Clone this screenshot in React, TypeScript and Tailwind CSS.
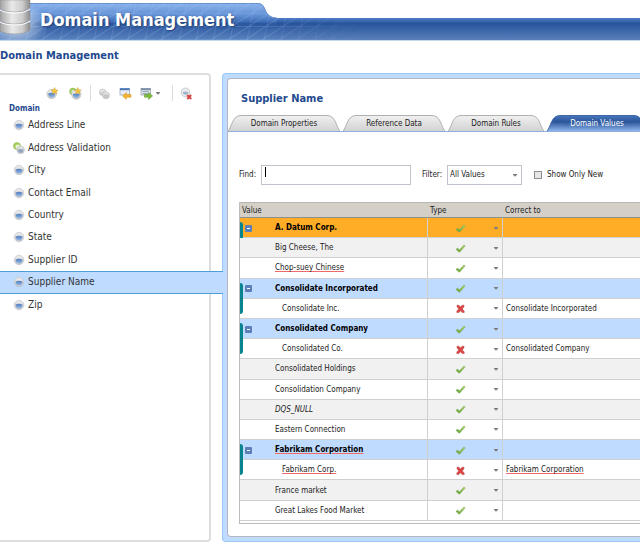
import { useState } from "react";
import type { ReactNode } from "react";
import clsx from "clsx";

type Domain = { name: string; composite?: boolean };

type DomainValue = {
  value: string;
  valid: boolean;
  kind?: "leader" | "synonym";
  correctTo?: string;
  misspelled?: boolean;
};

const domains: Domain[] = [
  { name: "Address Line" },
  { name: "Address Validation", composite: true },
  { name: "City" },
  { name: "Contact Email" },
  { name: "Country" },
  { name: "State" },
  { name: "Supplier ID" },
  { name: "Supplier Name" },
  { name: "Zip" },
];

const tabs = [
  { name: "Domain Properties", width: "w-[112px]" },
  { name: "Reference Data", width: "w-[102px]" },
  { name: "Domain Rules", width: "w-[96px]" },
  { name: "Domain Values", width: "w-[100px]" },
];

const values: DomainValue[] = [
  { value: "A. Datum Corp.", valid: true, kind: "leader" },
  { value: "Big Cheese, The", valid: true },
  { value: "Chop-suey Chinese", valid: true, misspelled: true },
  { value: "Consolidate Incorporated", valid: true, kind: "leader" },
  { value: "Consolidate Inc.", valid: false, kind: "synonym", correctTo: "Consolidate Incorporated" },
  { value: "Consolidated Company", valid: true, kind: "leader" },
  { value: "Consolidated Co.", valid: false, kind: "synonym", correctTo: "Consolidated Company" },
  { value: "Consolidated Holdings", valid: true },
  { value: "Consolidation Company", valid: true },
  { value: "DQS_NULL", valid: true },
  { value: "Eastern Connection", valid: true },
  { value: "Fabrikam Corporation", valid: true, kind: "leader", misspelled: true },
  { value: "Fabrikam Corp.", valid: false, kind: "synonym", correctTo: "Fabrikam Corporation", misspelled: true },
  { value: "France market", valid: true },
  { value: "Great Lakes Food Market", valid: true },
];

const Gradients = () => (
  <svg width="0" height="0" className="absolute" aria-hidden="true">
    <defs>
      <linearGradient id="ball" x1="0" y1="0" x2="0" y2="1">
        <stop offset="0" stopColor="#eeeeee" />
        <stop offset="1" stopColor="#c3c6ca" />
      </linearGradient>
      <linearGradient id="bowl" x1="0" y1="0" x2="0" y2="1">
        <stop offset="0" stopColor="#4f7dbe" />
        <stop offset="1" stopColor="#94b8e4" />
      </linearGradient>
      <linearGradient id="metal" x1="0" y1="0" x2="1" y2="0">
        <stop offset="0" stopColor="#a4a4a4" />
        <stop offset="0.4" stopColor="#e9e9e9" />
        <stop offset="0.75" stopColor="#cccccc" />
        <stop offset="1" stopColor="#8c8c8c" />
      </linearGradient>
      <linearGradient id="tabGray" x1="0" y1="0" x2="0" y2="1">
        <stop offset="0" stopColor="#f0f0f0" />
        <stop offset="1" stopColor="#d2d2d2" />
      </linearGradient>
      <linearGradient id="tabBlue" x1="0" y1="0" x2="0" y2="1">
        <stop offset="0" stopColor="#4774bb" />
        <stop offset="0.4" stopColor="#2a5599" />
        <stop offset="1" stopColor="#8db4ec" />
      </linearGradient>
      <linearGradient id="check" x1="1" y1="0" x2="0" y2="1">
        <stop offset="0" stopColor="#b4dc6c" />
        <stop offset="1" stopColor="#5c9c2c" />
      </linearGradient>
    </defs>
  </svg>
);

const Ball = () => (
  <g>
    <circle cx="6" cy="6" r="4.7" fill="url(#ball)" stroke="#b9bcc1" strokeWidth="0.6" />
    <path d="M2.7 5.4q3.3-1.2 6.6 0a3.35 3.35 0 1 1-6.6 0z" fill="url(#bowl)" />
  </g>
);

const Star = () => (
  <path d="M0-3.4 1-1.1l2.5.2-1.9 1.6.6 2.4L0 1.8l-2.2 1.3.6-2.4-1.9-1.6 2.5-.2z" fill="#f6c840" stroke="#c99a34" strokeWidth="0.5" />
);

const DomainIcon = ({ composite }: { composite?: boolean }) => (
  <svg width="12" height="12" viewBox="0 0 12 12" className="shrink-0" aria-hidden="true">
    {composite ? (
      <>
        <circle cx="4" cy="4" r="3.6" fill="#a4cf5c" stroke="#8fb957" strokeWidth="0.5" />
        <circle cx="4.8" cy="4.8" r="2.4" fill="#e6f2d2" />
        <circle cx="7.6" cy="7.9" r="3.7" fill="url(#ball)" stroke="#aeb1b6" strokeWidth="0.6" />
        <path d="M5 7.5q2.6-.9 5.2 0a2.65 2.65 0 1 1-5.2 0z" fill="#93a6bf" />
      </>
    ) : (
      <Ball />
    )}
  </svg>
);

const ToolIcon = ({ label, children }: { label: string; children: ReactNode }) => (
  <button type="button" aria-label={label} title={label}>
    <svg width="13" height="13" viewBox="0 0 13 13">
      {children}
    </svg>
  </button>
);

const Caret = () => (
  <svg width="4" height="3" viewBox="0 0 4 3" className="shrink-0" aria-hidden="true">
    <path d="M0 0h4v.8L2 2.7 0 .8z" fill="#7c7c7c" />
  </svg>
);

const Toolbar = () => (
  <div className="flex h-[14px] items-center pl-[46px]">
    <ToolIcon label="Create a domain">
      <g transform="translate(-.4 1)">
        <Ball />
      </g>
      <g transform="translate(8.6 4)">
        <Star />
      </g>
    </ToolIcon>
    <div className="ml-2.5 flex">
      <ToolIcon label="Create a composite domain">
        <circle cx="4" cy="4.5" r="3.4" fill="#a4cf5c" stroke="#8fb957" strokeWidth="0.6" />
        <circle cx="4.4" cy="5" r="2" fill="#e6f2d2" />
        <g transform="translate(1.3 1.6)">
          <Ball />
        </g>
        <g transform="translate(8.8 4)">
          <Star />
        </g>
      </ToolIcon>
    </div>
    <span className="ml-2 h-4 w-px bg-[#dcdcdc]" />
    <div className="ml-[7px] flex gap-2">
      <ToolIcon label="Create a linked domain">
        <g fill="url(#ball)" stroke="#b5b5b5" strokeWidth="0.6">
          <circle cx="4.6" cy="5.2" r="3.2" />
          <circle cx="8" cy="8.2" r="3.5" />
        </g>
        <path d="M5.6 7.8q2.4-.8 4.8 0a2.4 2.4 0 1 1-4.8 0z" fill="#c3c3c3" />
      </ToolIcon>
      <ToolIcon label="Import a domain">
        <rect x="1" y="1.5" width="9.5" height="6.5" fill="#e9eef5" stroke="#8ea0ba" strokeWidth="0.7" />
        <path d="M1 1.2h9.5v2H1z" fill="#4c78b8" />
        <path d="M3.4 8.9 7.4 5.4v2.1H12v2.8H7.4v2.1z" fill="#f5b42c" stroke="#cf9430" strokeWidth="0.5" />
      </ToolIcon>
      <ToolIcon label="Export a domain">
        <rect x="1" y="1.5" width="9.5" height="6.5" fill="#e3e8ee" stroke="#8f9aa8" strokeWidth="0.7" />
        <path d="M1 1.2h9.5v2H1zM2.5 4.3h6v.8h-6zM2.5 6h6v.8h-6z" fill="#7e8fa6" />
        <path d="M12.6 8.9 8.6 5.4v2.1H4.4v2.8h4.2v2.1z" fill="#7cbb3a" stroke="#5c9630" strokeWidth="0.5" />
      </ToolIcon>
    </div>
    <div className="ml-[3px] flex">
      <Caret />
    </div>
    <span className="ml-3 h-4 w-px bg-[#dcdcdc]" />
    <div className="ml-[7px] flex">
      <ToolIcon label="Delete the domain">
        <circle cx="5.6" cy="5.4" r="4.4" fill="#ececec" stroke="#b9bcc1" strokeWidth="0.7" />
        <path d="M2.8 5q2.8-1 5.6 0a2.8 2.8 0 1 1-5.6 0z" fill="#9db4d0" />
        <path d="m7.2 8 4 4M11.2 8l-4 4" stroke="#d64545" strokeWidth="2" />
      </ToolIcon>
    </div>
  </div>
);

const TypeIcon = ({ valid }: { valid: boolean }) => (
  <svg width="11" height="11" viewBox="0 0 11 11" className="shrink-0" aria-hidden="true">
    {valid ? (
      <path d="M.9 6.3 2.7 5.2l1.8 1.5L8.9 2l1.3.9-5.5 6.2H3.9z" fill="url(#check)" stroke="#7ba65a" strokeWidth="0.5" />
    ) : (
      <path
        d="M2 2.2h1.9l1.6 1.9 1.6-1.9H9v1.5L7.3 5.9 9.2 8v1.6H7.2L5.5 7.7 3.8 9.6h-2V8l1.9-2.1L2 3.7z"
        fill="#dd4444"
        stroke="#b94848"
        strokeWidth="0.5"
      />
    )}
  </svg>
);

const Banner = () => (
  <header className="relative h-[41px] pt-[18px]">
    <div className="h-[23px] border-b border-[#c5d8ea] bg-linear-to-b from-[#4f7dc8] via-[#28549b] via-25% to-[#5a80bb]" />
    <svg width="370" height="41" viewBox="0 0 370 41" className="absolute left-0 top-0" aria-hidden="true">
      <defs>
        <linearGradient id="raised" x1="0" y1="0" x2="0" y2="1">
          <stop offset="0" stopColor="#8db5ee" />
          <stop offset="0.35" stopColor="#5f8dd2" />
          <stop offset="0.5" stopColor="#3f6eb8" />
          <stop offset="0.56" stopColor="#2a569e" />
          <stop offset="1" stopColor="#5a82be" />
        </linearGradient>
        <linearGradient id="fade" x1="0" y1="0" x2="1" y2="0">
          <stop offset="0.7" stopColor="#fff" />
          <stop offset="1" stopColor="#000" />
        </linearGradient>
        <radialGradient id="glow">
          <stop offset="0" stopColor="#e2eefc" />
          <stop offset="1" stopColor="#e2eefc" stopOpacity="0" />
        </radialGradient>
        <pattern id="mesh" width="17" height="13" patternUnits="userSpaceOnUse" patternTransform="skewX(-12)">
          <path d="M0 13V0h17M0 13 17 0" fill="none" stroke="#a9cdf8" strokeWidth="0.8" />
        </pattern>
        <mask id="meshFade">
          <rect width="370" height="41" fill="url(#fade)" />
        </mask>
        <clipPath id="shape">
          <path d="M0 3h258q5 0 7 6 3 9 12 9h93v22H0z" />
        </clipPath>
      </defs>
      <path d="M0 3h258q5 0 7 6 3 9 12 9v22H0z" fill="url(#raised)" />
      <path d="M0 3.5h258q5 0 7 6 3 8.500 12 8.500" fill="none" stroke="#5f86c0" strokeWidth="0.8" />
      <g clipPath="url(#shape)">
        <rect width="370" height="41" fill="url(#mesh)" opacity="0.45" mask="url(#meshFade)" />
        <ellipse cx="16" cy="24" rx="32" ry="22" fill="url(#glow)" />
      </g>
      <g stroke="#8b8b8b" strokeWidth="0.5">
        <path d="M0 23h30v7q-5 4-15 4T0 31z" fill="url(#metal)" />
        <path d="M0 11h30v9q-5 4-15 4T0 21z" fill="url(#metal)" />
        <path d="M0 0h30v8q-5 4-15 4T0 9z" fill="url(#metal)" />
      </g>
      <path d="M0 10q5 3 15 3t15-4M0 22q5 3 15 3t15-4" fill="none" stroke="#fff" />
    </svg>
    <h1 className="absolute left-10 top-2 text-[18px] leading-6 font-bold text-white [text-shadow:1px_1px_2px_#1d3d73]">
      Domain Management
    </h1>
  </header>
);

const TabCap = ({ active, flip }: { active: boolean; flip?: boolean }) => (
  <svg width="16" height="16" viewBox="0 0 16 16" className={clsx("shrink-0", flip && "-scale-x-100")} aria-hidden="true">
    <path d="M0 16C4 12 4 .5 13 .5h3V16z" fill={active ? "url(#tabBlue)" : "url(#tabGray)"} />
    <path d="M0 16C4 12 4 .5 13 .5h3" fill="none" stroke={active ? "#3c67a8" : "#b0b0b0"} />
  </svg>
);

const DomainList = ({ selected, onSelect }: { selected: string; onSelect: (name: string) => void }) => (
  <aside className="w-[211px] shrink-0 rounded-r border-2 border-l-0 border-[#dedede] pt-[11px]">
    <Toolbar />
    <h3 className="mt-1 pl-[9px] text-[8px] leading-[10px] font-bold text-[#1f4a8f]">Domain</h3>
    <ul className="-mr-[14px] flex h-[202px] flex-col">
      {domains.map((domain) => (
        <li key={domain.name} className="flex flex-1">
          <button
            type="button"
            onClick={() => onSelect(domain.name)}
            className={clsx(
              "relative flex w-full items-center gap-[3px] border-y pl-[13px] text-left text-[10px] leading-4 text-[#333]",
              domain.name === selected ? "border-[#4c9fd6] bg-[#bfdbff]" : "border-transparent"
            )}
          >
            <DomainIcon composite={domain.composite} />
            {domain.name}
          </button>
        </li>
      ))}
    </ul>
  </aside>
);

const ValueRow = ({ item, index, current }: { item: DomainValue; index: number; current: boolean }) => {
  const leader = item.kind === "leader";
  const synonym = item.kind === "synonym";
  const spelling = item.misspelled && "underline decoration-[#f06a6a] decoration-1 underline-offset-1";

  return (
    <tr
      className={clsx(
        "h-5",
        current ? "bg-[#ffac27]" : leader ? "bg-[#bfdbff]" : index % 2 === 1 && !synonym ? "bg-[#f1f1f1]" : "bg-white"
      )}
    >
      <td className="relative border-r border-b border-[#d0d0d0] px-0 pt-px pb-0">
        {(leader || synonym) && (
          <span
            className={clsx(
              "absolute left-0 w-[3px] bg-[#068590]",
              leader ? "top-1 -bottom-px rounded-tr-sm" : "top-0 bottom-1 rounded-br-sm"
            )}
          />
        )}
        <div className="flex items-center">
          <span className="flex w-[35px] shrink-0 pl-[5px]">
            {leader && (
              <button
                type="button"
                aria-label={`Collapse ${item.value}`}
                className="flex size-[7px] items-center justify-center rounded-[1px] bg-[#5b7fb8]"
              >
                <span className="h-px w-[3px] bg-white" />
              </button>
            )}
          </span>
          <span
            className={clsx(
              "whitespace-nowrap",
              leader && "font-bold text-black",
              synonym && "pl-[7px]",
              item.value === "DQS_NULL" && "italic"
            )}
          >
            <span className={clsx(spelling)}>{item.value}</span>
          </span>
        </div>
      </td>
      <td className="border-r border-b border-[#d0d0d0] px-0 pt-px pb-0">
        <button
          type="button"
          aria-haspopup="listbox"
          aria-label={item.valid ? "Correct" : "Error"}
          className="flex w-full items-center justify-between pr-1 pl-[27px]"
        >
          <TypeIcon valid={item.valid} />
          <Caret />
        </button>
      </td>
      <td className="border-b border-[#d0d0d0] pt-px pr-0 pb-0 pl-[3px]">
        <span className={clsx("whitespace-nowrap", spelling)}>{item.correctTo}</span>
      </td>
    </tr>
  );
};

const App = () => {
  const [selected, setSelected] = useState("Supplier Name");
  const [activeTab, setActiveTab] = useState("Domain Values");
  const [find, setFind] = useState("");
  const [onlyNew, setOnlyNew] = useState(false);

  return (
    <div className="overflow-hidden bg-white pb-3 font-['DejaVu_Sans_Condensed','Noto_Sans',sans-serif] text-[8px] leading-3 text-[#222]">
      <Gradients />
      <Banner />
      <h2 className="mt-[7px] mb-[9px] text-[11px] leading-4 font-bold text-[#1f4a8f]">Domain Management</h2>

      <div className="flex gap-[11px]">
        <DomainList selected={selected} onSelect={setSelected} />

        <main className="min-w-0 flex-1 rounded-l border border-r-0 border-[#9cc8f8] bg-[#bfdbff] py-1 pl-1">
          <div className="overflow-hidden rounded-l-sm border border-r-0 border-[#b4b6c4] bg-white pt-3 pb-3">
            <h2 className="pl-[13px] text-[11px] leading-4 font-bold text-[#1f4a8f]">{selected}</h2>

            <div role="tablist" className="mt-2 flex gap-[3px] border-b border-[#8fb0dd]">
              {tabs.map((tab) => {
                const active = tab.name === activeTab;
                return (
                  <button
                    key={tab.name}
                    type="button"
                    role="tab"
                    aria-selected={active}
                    onClick={() => setActiveTab(tab.name)}
                    className={clsx("flex h-4 shrink-0", tab.width)}
                  >
                    <TabCap active={active} />
                    <span
                      className={clsx(
                        "flex h-4 flex-1 items-center justify-center border-t pt-px whitespace-nowrap",
                        active
                          ? "border-[#3c67a8] bg-linear-to-b from-[#4774bb] via-[#2a5599] via-40% to-[#8db4ec] text-white"
                          : "border-[#b0b0b0] bg-linear-to-b from-[#f0f0f0] to-[#d2d2d2]"
                      )}
                    >
                      {tab.name}
                    </span>
                    <TabCap active={active} flip />
                  </button>
                );
              })}
            </div>

            <div className="mt-[33px] flex h-5 items-center pl-[11px]">
              <label htmlFor="find" className="w-[22px]">
                Find:
              </label>
              <div className="relative flex">
                <input
                  id="find"
                  type="text"
                  value={find}
                  onChange={(e) => setFind(e.target.value)}
                  className="h-5 w-[150px] border border-[#c0c3cc] px-1 outline-none"
                />
                {!find && <span className="pointer-events-none absolute top-0.5 left-1 h-2.5 w-px bg-black" />}
              </div>
              <label htmlFor="filter" className="ml-[11px] w-[25px]">
                Filter:
              </label>
              <div className="grid h-5 w-[75px] items-center">
                <select
                  id="filter"
                  className="col-start-1 row-start-1 h-5 appearance-none border border-[#c0c3cc] bg-white px-0.5 outline-none"
                >
                  <option>All Values</option>
                  <option>Correct</option>
                  <option>Error</option>
                  <option>Invalid</option>
                </select>
                <span className="pointer-events-none col-start-1 row-start-1 mr-[5px] justify-self-end">
                  <Caret />
                </span>
              </div>
              <label className="ml-3 flex items-center gap-[5px] whitespace-nowrap">
                <input
                  type="checkbox"
                  checked={onlyNew}
                  onChange={(e) => setOnlyNew(e.target.checked)}
                  className="size-2 appearance-none border border-[#8f8f8f] bg-[#e6e6e6] checked:bg-[#4c74b2]"
                />
                Show Only New
              </label>
            </div>

            <div className="mt-[17px] ml-[11px] border-b border-l border-[#bdbdbd] pb-0.5">
              <table className="h-[319px] w-full table-fixed border-separate border-spacing-0">
                <colgroup>
                  <col className="w-[188px]" />
                  <col className="w-[75px]" />
                  <col />
                </colgroup>
                <thead>
                  <tr className="h-4 bg-[#d4d0c8] text-left">
                    <th className="border-t border-b border-t-[#b8b8b8] border-b-[#8f8f8f] pt-px pr-0 pb-0 pl-0.5 font-normal">Value</th>
                    <th className="border-t border-b border-t-[#b8b8b8] border-b-[#8f8f8f] pt-px pr-0 pb-0 pl-0.5 font-normal">Type</th>
                    <th className="border-t border-b border-t-[#b8b8b8] border-b-[#8f8f8f] pt-px pr-0 pb-0 pl-0.5 font-normal">Correct to</th>
                  </tr>
                </thead>
                <tbody>
                  {values.map((item, i) => (
                    <ValueRow key={item.value} item={item} index={i} current={i === 0} />
                  ))}
                </tbody>
              </table>
            </div>
          </div>
        </main>
      </div>
    </div>
  );
};

export default App;
